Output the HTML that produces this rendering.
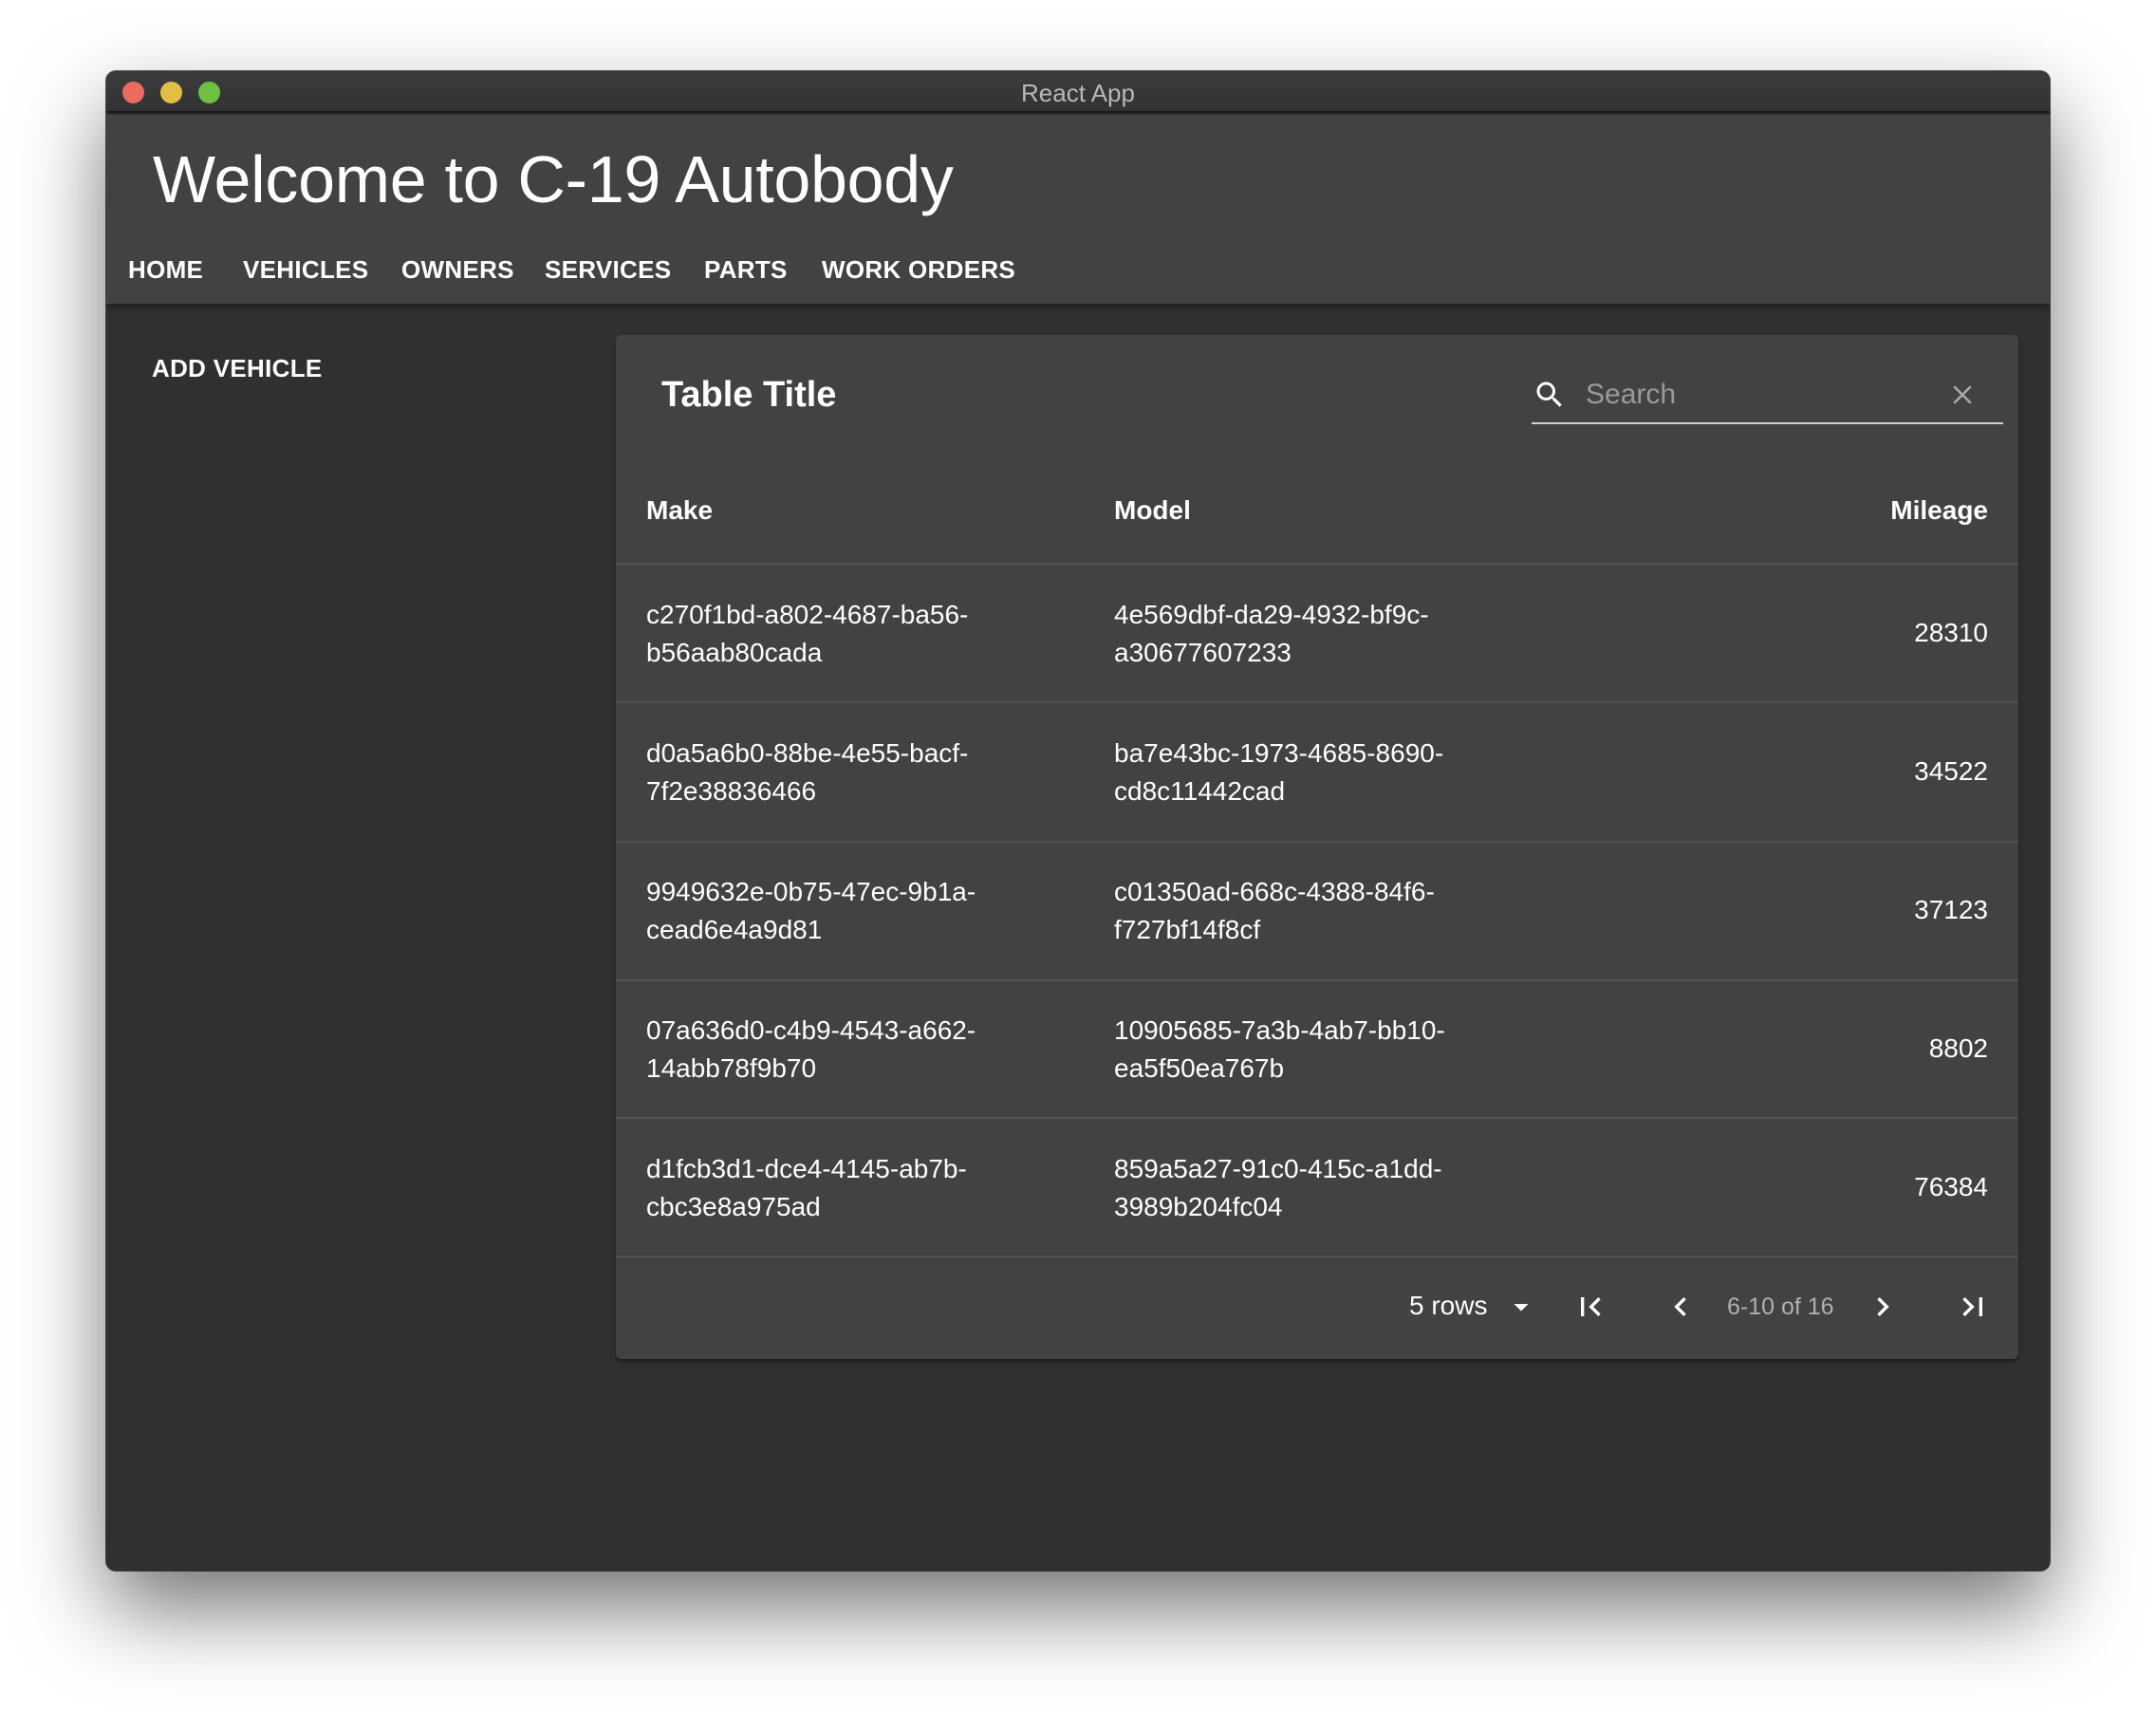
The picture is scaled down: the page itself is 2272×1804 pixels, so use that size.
<!DOCTYPE html>
<html><head><meta charset="utf-8"><style>
*{margin:0;padding:0;box-sizing:border-box}
body{width:2272px;height:1804px;background:#fff;font-family:"Liberation Sans",sans-serif;position:relative;overflow:hidden;color:#fff}
.win{position:absolute;left:112px;top:75px;width:2048px;height:1580px;background:#303030;border-radius:10px;overflow:hidden;box-shadow:0 40px 90px rgba(0,0,0,.55),0 0 0 1px #555}
.tb{position:absolute;left:0;top:0;width:100%;height:44px;background:linear-gradient(#3c3c3e,#323234);border-bottom:2px solid #1a1a1a;text-align:center;line-height:46px;font-size:26px;color:#b8b8b8}
.dot{position:absolute;top:11px;width:23px;height:23px;border-radius:50%}
.hdr{position:absolute;left:0;top:46px;width:100%;height:199px;background:#424242;box-shadow:0 4px 8px rgba(0,0,0,.35)}
.h1{position:absolute;left:49px;top:28px;font-size:70px;letter-spacing:-0.3px}
.nav{position:absolute;top:148px;font-size:26px;font-weight:bold;letter-spacing:.3px}
.add{position:absolute;left:48px;top:298px;font-size:26px;font-weight:bold;letter-spacing:.3px}
.card{position:absolute;left:537px;top:278px;width:1478px;height:1079px;background:#424242;border-radius:6px;box-shadow:0 3px 4px rgba(0,0,0,.4)}
.t{position:absolute;font-size:28px}
.r{line-height:40px}
.hr{position:absolute;left:0;width:100%;height:2px;background:#525252}
.b{font-weight:bold}
</style></head><body>
<div class="win">
 <div class="tb">React App
  <div class="dot" style="left:17px;background:#ec6a5e"></div>
  <div class="dot" style="left:57px;background:#e0bf42"></div>
  <div class="dot" style="left:97px;background:#6ec043"></div>
 </div>
 <div class="hdr">
  <div class="h1">Welcome to C-19 Autobody</div>
  <div class="nav" style="left:23px">HOME</div>
  <div class="nav" style="left:144px">VEHICLES</div>
  <div class="nav" style="left:311px">OWNERS</div>
  <div class="nav" style="left:462px">SERVICES</div>
  <div class="nav" style="left:630px">PARTS</div>
  <div class="nav" style="left:754px">WORK ORDERS</div>
 </div>
 <div class="add">ADD VEHICLE</div>
 <div class="card">
  <div class="t b" style="left:48px;top:42px;font-size:38px">Table Title</div>
  <svg style="position:absolute;left:966px;top:45px" width="36" height="36" viewBox="0 0 24 24"><path fill="#fff" d="M15.5 14h-.79l-.28-.27A6.47 6.47 0 0 0 16 9.5 6.5 6.5 0 1 0 9.5 16c1.61 0 3.09-.59 4.23-1.57l.27.28v.79l5 4.99L20.49 19l-4.99-5zm-6 0C7.01 14 5 11.99 5 9.5S7.01 5 9.5 5 14 7.01 14 9.5 11.99 14 9.5 14z"/></svg>
  <div class="t" style="left:1022px;top:46px;font-size:30px;color:#9a9a9a">Search</div>
  <svg style="position:absolute;left:1404px;top:48px" width="30" height="30" viewBox="0 0 24 24"><path stroke="#aaa" stroke-width="2" d="M5 5L19 19M19 5L5 19"/></svg>
  <div style="position:absolute;left:965px;top:92px;width:497px;height:2px;background:#cfcfcf"></div>
  <div class="t b" style="left:32px;top:169px">Make</div>
  <div class="t b" style="left:525px;top:169px">Model</div>
  <div class="t b" style="right:32px;top:169px">Mileage</div>
  <div class="hr" style="top:240px"></div>

  <div class="t r" style="left:32px;top:275px">c270f1bd-a802-4687-ba56-<br>b56aab80cada</div>
  <div class="t r" style="left:525px;top:275px">4e569dbf-da29-4932-bf9c-<br>a30677607233</div>
  <div class="t" style="right:32px;top:298px">28310</div>
  <div class="hr" style="top:386px"></div>

  <div class="t r" style="left:32px;top:421px">d0a5a6b0-88be-4e55-bacf-<br>7f2e38836466</div>
  <div class="t r" style="left:525px;top:421px">ba7e43bc-1973-4685-8690-<br>cd8c11442cad</div>
  <div class="t" style="right:32px;top:444px">34522</div>
  <div class="hr" style="top:533px"></div>

  <div class="t r" style="left:32px;top:567px">9949632e-0b75-47ec-9b1a-<br>cead6e4a9d81</div>
  <div class="t r" style="left:525px;top:567px">c01350ad-668c-4388-84f6-<br>f727bf14f8cf</div>
  <div class="t" style="right:32px;top:590px">37123</div>
  <div class="hr" style="top:679px"></div>

  <div class="t r" style="left:32px;top:713px">07a636d0-c4b9-4543-a662-<br>14abb78f9b70</div>
  <div class="t r" style="left:525px;top:713px">10905685-7a3b-4ab7-bb10-<br>ea5f50ea767b</div>
  <div class="t" style="right:32px;top:736px">8802</div>
  <div class="hr" style="top:824px"></div>

  <div class="t r" style="left:32px;top:859px">d1fcb3d1-dce4-4145-ab7b-<br>cbc3e8a975ad</div>
  <div class="t r" style="left:525px;top:859px">859a5a27-91c0-415c-a1dd-<br>3989b204fc04</div>
  <div class="t" style="right:32px;top:882px">76384</div>
  <div class="hr" style="top:970px"></div>

  <div class="t" style="left:836px;top:1007px">5 rows</div>
  <svg style="position:absolute;left:936px;top:1006px" width="36" height="36" viewBox="0 0 24 24"><path fill="#fff" d="M7 10l5 5 5-5z"/></svg>
  <svg style="position:absolute;left:1007px;top:1004px" width="40" height="40" viewBox="0 0 24 24"><path fill="#fff" d="M18.41 16.59L13.82 12l4.59-4.59L17 6l-6 6 6 6zM6 6h2v12H6z"/></svg>
  <svg style="position:absolute;left:1102px;top:1004px" width="40" height="40" viewBox="0 0 24 24"><path fill="#fff" d="M15.41 16.59L10.83 12l4.58-4.59L14 6l-6 6 6 6z"/></svg>
  <div class="t" style="left:1171px;top:1010px;font-size:25px;color:#b0b0b0">6-10 of 16</div>
  <svg style="position:absolute;left:1315px;top:1004px" width="40" height="40" viewBox="0 0 24 24"><path fill="#fff" d="M8.59 16.59L13.17 12 8.59 7.41 10 6l6 6-6 6z"/></svg>
  <svg style="position:absolute;left:1410px;top:1004px" width="40" height="40" viewBox="0 0 24 24"><path fill="#fff" d="M5.59 7.41L10.18 12l-4.59 4.59L7 18l6-6-6-6zM16 6h2v12h-2z"/></svg>
 </div>
</div>
</body></html>
